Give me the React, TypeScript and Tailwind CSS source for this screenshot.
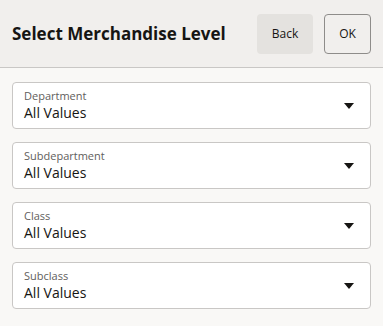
const fields = ['Department', 'Subdepartment', 'Class', 'Subclass'];

function SelectField({ label }: { label: string }) {
  return (
    <div className="flex h-[47px] items-center rounded-[4px] border border-[#c9c7c5] bg-white pl-[11px] pr-[16px]">
      <div className="flex flex-1 flex-col pt-[1px]">
        <span className="text-[11px] leading-[14px] text-[#5f5e5c]">{label}</span>
        <span className="text-[14px] leading-[20px] text-[#161513]">All Values</span>
      </div>
      <svg width="10" height="6" viewBox="0 0 10 6" className="mt-[1px]">
        <path d="M0 0h10L5 6z" fill="#161513" />
      </svg>
    </div>
  );
}

export default function App() {
  return (
    <div className="h-[326px] w-[383px] bg-[#f9f8f6] font-['Open_Sans',sans-serif]">
      <div className="flex h-[68px] items-center border-b border-[#c9c7c5] bg-[#f1efed] pl-[12px] pr-[12px]">
        <h1 className="flex-1 text-[17px] font-bold text-[#161513]">Select Merchandise Level</h1>
        <button className="mr-[11px] h-[40px] w-[56px] rounded-[4px] bg-[#e4e2df] text-[12px] text-[#161513]">
          Back
        </button>
        <button className="h-[40px] w-[47px] rounded-[4px] border border-[#8e8c8a] text-[12px] text-[#161513]">
          OK
        </button>
      </div>
      <div className="flex flex-col gap-[13px] px-[12px] pt-[14px]">
        {fields.map((f) => (
          <SelectField key={f} label={f} />
        ))}
      </div>
    </div>
  );
}
